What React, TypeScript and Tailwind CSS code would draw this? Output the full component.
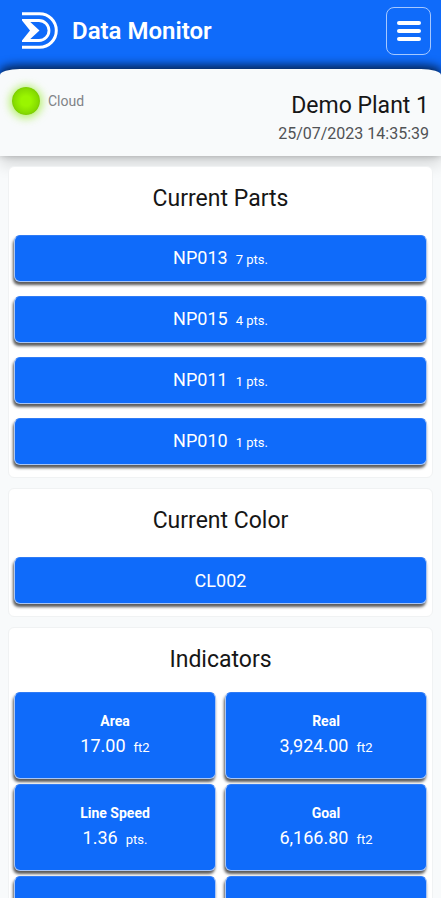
import React from "react";

const parts = [
  { code: "NP013", amount: "7 pts." },
  { code: "NP015", amount: "4 pts." },
  { code: "NP011", amount: "1 pts." },
  { code: "NP010", amount: "1 pts." },
];

const indicators = [
  { label: "Area", value: "17.00", unit: "ft2" },
  { label: "Real", value: "3,924.00", unit: "ft2" },
  { label: "Line Speed", value: "1.36", unit: "pts." },
  { label: "Goal", value: "6,166.80", unit: "ft2" },
  { label: "", value: "", unit: "" },
  { label: "", value: "", unit: "" },
];

const raised =
  "rounded-md border border-[#a9c6f5] border-t-[#2f7bf5] bg-[#0f6bfa] text-white shadow-[-1px_3px_3px_rgba(0,0,0,0.65)]";

function Logo() {
  return (
    <svg viewBox="0 0 36 37" className="h-[37px] w-9" fill="none" stroke="white" aria-hidden="true">
      <path d="M0 1.7H17.5A16.8 16.8 0 0 1 17.5 35.3H0" strokeWidth="3" />
      <path d="M1 8.5H17A10 10 0 0 1 17 28.5H1" strokeWidth="2.8" />
      <path d="M0 7.1H5L17.5 18.5L5 29.9H0V28.5L8 18.5L0 8.5Z" fill="white" stroke="none" />
    </svg>
  );
}

function Card({ title, compact = false, children }: { title: string; compact?: boolean; children: React.ReactNode }) {
  return (
    <section className="rounded-md border border-[#f0f2f3] bg-white px-[5px] pb-3">
      <h2 className={`pt-[18px] text-center text-[23px] leading-7 text-[#161616] ${compact ? "pb-[18px]" : "pb-[22px]"}`}>
        {title}
      </h2>
      {children}
    </section>
  );
}

export default function App() {
  return (
    <div className="flex h-screen flex-col overflow-hidden border-b-2 border-white bg-[#f8fafb] font-[Roboto,sans-serif]">
      <div className="shrink-0 bg-[#0f6bfa]">
        <header className="flex h-[69px] items-start justify-between pt-[7px] pr-[10px] pl-[22px]">
          <div className="flex items-center gap-[14px] pt-[5px]">
            <Logo />
            <h1 className="text-2xl font-semibold text-white">Data Monitor</h1>
          </div>
          <button
            type="button"
            aria-label="Open menu"
            className="flex h-12 w-[45px] flex-col items-center justify-center gap-1 rounded-lg border border-[#a5c8ff]"
          >
            <span className="h-1 w-6 rounded-sm bg-white" />
            <span className="h-1 w-6 rounded-sm bg-white" />
            <span className="h-1 w-6 rounded-sm bg-white" />
          </button>
        </header>
        <div className="flex h-[87px] items-start justify-between rounded-t-[20px_6px] bg-[#f8fafb] px-3 shadow-[0_-4px_10px_rgba(0,0,0,0.65),0_8px_16px_rgba(0,0,0,0.15)]">
          <div className="flex items-center gap-2 pt-[18px]">
            <span className="size-7 rounded-full bg-[radial-gradient(circle,#9af500_25%,#86dc00_60%,#5fa300_100%)] shadow-[0_1px_8px_2px_rgba(140,235,20,0.65)]" />
            <span className="text-sm text-[#808387]">Cloud</span>
          </div>
          <div className="pt-[25px] text-right">
            <p className="text-[23px] leading-6 text-[#161616]">Demo Plant 1</p>
            <p className="text-base leading-8 text-[#505255]">25/07/2023 14:35:39</p>
          </div>
        </div>
      </div>
      <main className="flex flex-col gap-[10px] px-2 pt-[10px]">
        <Card title="Current Parts">
          <div className="flex flex-col gap-[14px]">
            {parts.map((p) => (
              <button
                key={p.code}
                type="button"
                className={`flex h-[47px] items-baseline justify-center gap-2 pt-2 ${raised}`}
              >
                <span className="text-lg">{p.code}</span>
                <span className="text-[13px]">{p.amount}</span>
              </button>
            ))}
          </div>
        </Card>
        <Card title="Current Color">
          <button type="button" className={`block h-[47px] w-full text-lg ${raised}`}>
            CL002
          </button>
        </Card>
        <Card title="Indicators" compact>
          <div className="grid grid-cols-2 gap-x-[9px] gap-y-[5px]">
            {indicators.map((item, i) => (
              <button
                key={i}
                type="button"
                className={`flex h-[87px] flex-col items-center justify-center gap-px ${raised}`}
              >
                <span className="text-sm leading-5 font-bold">{item.label}</span>
                <span className="flex items-baseline gap-2">
                  <span className="text-lg">{item.value}</span>
                  <span className="text-[13px]">{item.unit}</span>
                </span>
              </button>
            ))}
          </div>
        </Card>
      </main>
    </div>
  );
}
